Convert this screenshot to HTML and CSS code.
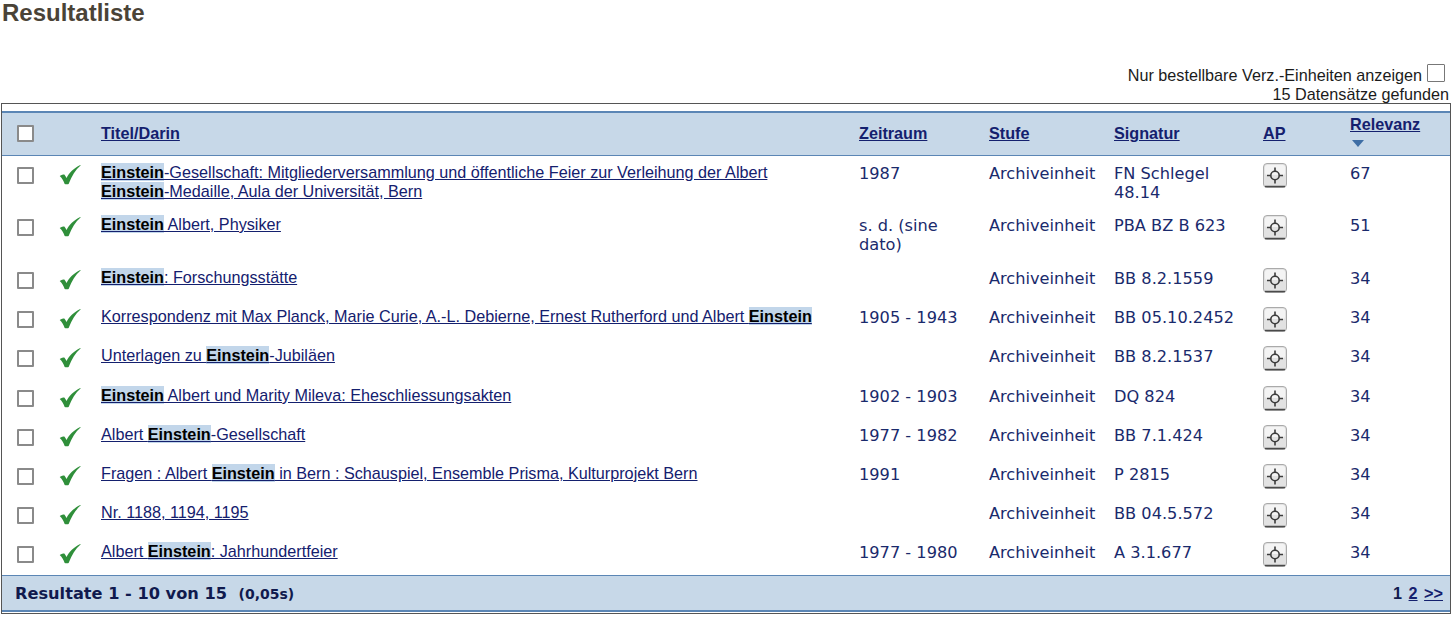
FILE: index.html
```html
<!DOCTYPE html>
<html lang="de">
<head>
<meta charset="utf-8">
<title>Resultatliste</title>
<link rel="stylesheet" href="styles.css">
</head>
<body>
<svg class="defs" width="0" height="0" aria-hidden="true">
  <symbol id="tick" viewBox="0 0 24 22"><path d="M.8 12.500c2-1 3.700-1.400 5-1.400 1.100 1.200 1.800 2.500 2.300 3.700C11 9.500 16 4 23.200.6c.5 0 .6.3.3.7C18 6 14 12.500 10.500 21.300c-.6.500-3.500.5-4.300 0C5 18 3.500 15 .8 12.500z" fill="#2f8f3a"/></symbol>
  <symbol id="target" viewBox="0 0 24 25"><rect x=".5" y=".5" width="23" height="24" rx="3.500" fill="#e2e2e2" stroke="#aaa"/><rect x="2" y="2" width="20" height="10" rx="2" fill="#f4f4f4"/><path d="M2 23.500h20" stroke="#4a4a4a" stroke-width="1.500"/><circle cx="12" cy="12.500" r="4.200" fill="none" stroke="#3c3c3c" stroke-width="1.600"/><path d="M12 4.500v4M12 16.500v4M4 12.500h4M16 12.500h4" stroke="#3c3c3c" stroke-width="1.600"/></symbol>
</svg>
<h1 class="title">Resultatliste</h1>
<div class="filter"><span class="filter-label">Nur bestellbare Verz.-Einheiten anzeigen</span><span class="box"></span></div>
<div class="found">15 Datensätze gefunden</div>
<div class="frame">
<table class="results">
<colgroup><col class="c1"><col class="c2"><col class="c3"><col class="c4"><col class="c5"><col class="c6"><col class="c7"><col class="c8"></colgroup>
<thead><tr>
<th><span class="box"></span></th><th></th>
<th><a href="#">Titel/Darin</a></th><th><a href="#">Zeitraum</a></th><th><a href="#">Stufe</a></th><th><a href="#">Signatur</a></th><th><a href="#">AP</a></th>
<th class="rel"><a href="#">Relevanz</a><span class="sort"></span></th>
</tr></thead>
<tbody>
<tr><td><span class="box"></span></td><td><svg class="tick"><use href="#tick"/></svg></td><td class="t"><a href="#"><mark>Einstein</mark>-Gesellschaft: Mitgliederversammlung und öffentliche Feier zur Verleihung der Albert <mark>Einstein</mark>-Medaille, Aula der Universität, Bern</a></td><td>1987</td><td>Archiveinheit</td><td>FN Schlegel 48.14</td><td><svg class="target"><use href="#target"/></svg></td><td>67</td></tr>
<tr><td><span class="box"></span></td><td><svg class="tick"><use href="#tick"/></svg></td><td class="t"><a href="#"><mark>Einstein</mark> Albert, Physiker</a></td><td>s. d. (sine dato)</td><td>Archiveinheit</td><td>PBA BZ B 623</td><td><svg class="target"><use href="#target"/></svg></td><td>51</td></tr>
<tr><td><span class="box"></span></td><td><svg class="tick"><use href="#tick"/></svg></td><td class="t"><a href="#"><mark>Einstein</mark>: Forschungsstätte</a></td><td></td><td>Archiveinheit</td><td>BB 8.2.1559</td><td><svg class="target"><use href="#target"/></svg></td><td>34</td></tr>
<tr><td><span class="box"></span></td><td><svg class="tick"><use href="#tick"/></svg></td><td class="t"><a href="#">Korrespondenz mit Max Planck, Marie Curie, A.-L. Debierne, Ernest Rutherford und Albert <mark>Einstein</mark></a></td><td>1905 - 1943</td><td>Archiveinheit</td><td>BB 05.10.2452</td><td><svg class="target"><use href="#target"/></svg></td><td>34</td></tr>
<tr class="tall"><td><span class="box"></span></td><td><svg class="tick"><use href="#tick"/></svg></td><td class="t"><a href="#">Unterlagen zu <mark>Einstein</mark>-Jubiläen</a></td><td></td><td>Archiveinheit</td><td>BB 8.2.1537</td><td><svg class="target"><use href="#target"/></svg></td><td>34</td></tr>
<tr><td><span class="box"></span></td><td><svg class="tick"><use href="#tick"/></svg></td><td class="t"><a href="#"><mark>Einstein</mark> Albert und Marity Mileva: Eheschliessungsakten</a></td><td>1902 - 1903</td><td>Archiveinheit</td><td>DQ 824</td><td><svg class="target"><use href="#target"/></svg></td><td>34</td></tr>
<tr><td><span class="box"></span></td><td><svg class="tick"><use href="#tick"/></svg></td><td class="t"><a href="#">Albert <mark>Einstein</mark>-Gesellschaft</a></td><td>1977 - 1982</td><td>Archiveinheit</td><td>BB 7.1.424</td><td><svg class="target"><use href="#target"/></svg></td><td>34</td></tr>
<tr><td><span class="box"></span></td><td><svg class="tick"><use href="#tick"/></svg></td><td class="t"><a href="#">Fragen : Albert <mark>Einstein</mark> in Bern : Schauspiel, Ensemble Prisma, Kulturprojekt Bern</a></td><td>1991</td><td>Archiveinheit</td><td>P 2815</td><td><svg class="target"><use href="#target"/></svg></td><td>34</td></tr>
<tr><td><span class="box"></span></td><td><svg class="tick"><use href="#tick"/></svg></td><td class="t"><a href="#">Nr. 1188, 1194, 1195</a></td><td></td><td>Archiveinheit</td><td>BB 04.5.572</td><td><svg class="target"><use href="#target"/></svg></td><td>34</td></tr>
<tr class="tall"><td><span class="box"></span></td><td><svg class="tick"><use href="#tick"/></svg></td><td class="t"><a href="#">Albert <mark>Einstein</mark>: Jahrhundertfeier</a></td><td>1977 - 1980</td><td>Archiveinheit</td><td>A 3.1.677</td><td><svg class="target"><use href="#target"/></svg></td><td>34</td></tr>
</tbody>
</table>
<div class="footer"><div class="count">Resultate 1 - 10 von 15 <small>(0,05s)</small></div><div class="pages"><span>1</span> <a href="#">2</a> <a href="#">&gt;&gt;</a></div></div>
</div>
</body>
</html>
```
FILE: styles.css
```css
* { box-sizing: border-box; }
html, body { margin: 0; padding: 0; background: #fff; }
body { font-family: "Liberation Sans", Arial, sans-serif; color: #1b1b1b; height: 618px; overflow: hidden; }
.defs { position: absolute; }
.title { margin: 0; padding: 0 0 0 2px; height: 62px; font-size: 24px; line-height: 25px; font-weight: bold; color: #4a4337; }
.box { display: inline-block; width: 18px; height: 18px; border: 2px solid #8a8a8a; border-radius: 1px; background: #fff; }
.filter { display: flex; justify-content: flex-end; align-items: flex-start; gap: 5px; height: 20px; padding-right: 7px; font-size: 16.2px; line-height: 18px; }
.filter-label { margin-top: 4px; }
.filter .box { margin-top: 2px; border-width: 1px; border-color: #777; }
.found { height: 21px; padding: 2px 3px 0 0; text-align: right; font-size: 16.2px; line-height: 20px; }
.frame { margin: 0 1px; height: 511px; border: 1px solid #555; padding-top: 7px; }
.results { width: 100%; border-collapse: collapse; table-layout: fixed; font-family: "DejaVu Sans", Verdana, sans-serif; font-size: 16.2px; color: #1a2a6c; }
.c1 { width: 56px; } .c2 { width: 43px; } .c3 { width: 758px; } .c4 { width: 130px; } .c5 { width: 125px; } .c6 { width: 149px; } .c7 { width: 87px; } .c8 { width: auto; }
thead tr { height: 43px; background: #c7d8e8; border-top: 2px solid #5b86b5; border-bottom: 1px solid #5b86b5; }
th { padding: 0; text-align: left; vertical-align: middle; font-family: "Liberation Sans", Arial, sans-serif; font-size: 16.2px; font-weight: bold; }
th:first-child { padding-left: 15px; }
th:first-child .box { display: block; width: 17px; height: 17px; }
a { color: #14206e; }
.rel { vertical-align: top; padding-top: 2px; line-height: 18px; }
.sort { display: block; width: 0; height: 0; margin: 7px 0 0 2px; border-left: 6px solid transparent; border-right: 6px solid transparent; border-top: 7px solid #3e6ea5; }
tbody tr { height: 39px; }
tbody tr:nth-child(-n+2) { height: 53px; }
tbody tr.tall { height: 40px; }
td { padding: 8px 10px 0 0; vertical-align: top; line-height: 19px; }
td:first-child { padding: 11px 0 0 15px; line-height: 0; }
td:first-child .box { display: block; width: 17px; height: 17px; border-width: 2px; }
.t { font-family: "Liberation Sans", Arial, sans-serif; font-size: 16.2px; padding: 7px 40px 0 0; }
mark { background: #c2d6ea; color: #000; font-weight: bold; }
.tick { display: block; width: 22px; height: 21px; margin: 8px 0 0 1px; }
td:nth-child(2) { padding: 0; }
td:nth-child(7) { padding: 7px 0 0 0; }
.target { display: block; width: 24px; height: 25px; }
.footer { display: flex; justify-content: space-between; align-items: center; height: 37px; background: #c7d8e8; border-top: 1px solid #5b86b5; border-bottom: 2px solid #5b86b5; padding: 1px 7px 0 13px; color: #101a4e; font-weight: bold; }
.count { font-family: "DejaVu Sans", Verdana, sans-serif; font-size: 16.2px; }
.count small { font-size: 14px; margin-left: 6px; }
.pages { font-size: 16.2px; word-spacing: 2px; }
```
